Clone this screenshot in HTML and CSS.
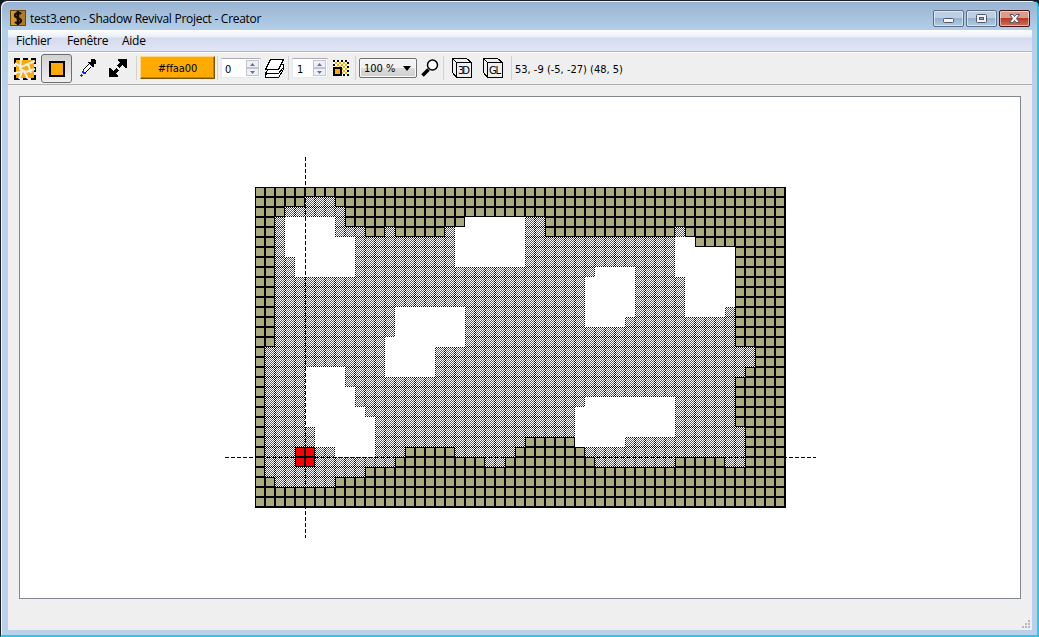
FILE: index.html
```html
<!DOCTYPE html>
<html lang="fr">
<head>
<meta charset="utf-8">
<title>test3.eno - Shadow Revival Project - Creator</title>
<link rel="stylesheet" href="styles.css">
</head>
<body>
<div class="window">
  <header class="titlebar">
    <svg class="app-icon" width="16" height="16" viewBox="0 0 16 16"><rect width="16" height="16" fill="#6b4510"/><rect x="1" y="1" width="14" height="14" fill="#b47b1c"/><path d="M1 1h5v14H1z" fill="#d69a2c"/><path d="M11 4C9 2 5 3 5 5.500S11 8 11 10.500 7 14 5 12M8 1v14" fill="none" stroke="#19110a" stroke-width="2.300"/></svg>
    <h1 class="title">test3.eno - Shadow Revival Project - Creator</h1>
    <div class="controls">
      <span class="control"><svg width="29" height="15" viewBox="0 0 29 15"><rect x="9.500" y="7.500" width="10" height="4" rx="1" fill="#f4f4f4" stroke="#535666"/></svg></span>
      <span class="control"><svg width="29" height="15" viewBox="0 0 29 15"><rect x="9.500" y="3.500" width="10" height="8" rx="1" fill="#f4f4f4" stroke="#535666"/><rect x="12.500" y="6.500" width="4" height="2" fill="#8fb0d0" stroke="#535666"/></svg></span>
      <span class="control control-close"><svg width="29" height="15" viewBox="0 0 29 15"><path d="M10 3.500h3l1.500 2 1.500-2h3.500L16.500 7.500l3 4H16l-1.500-2-1.500 2H9.500l3-4z" fill="#f4f4f4" stroke="#535666"/></svg></span>
    </div>
  </header>
  <nav class="menubar"><span class="m-file">Fichier</span><span class="m-window">Fenêtre</span><span>Aide</span></nav>
  <div class="toolbar">
    <svg class="i-select" width="22" height="22" viewBox="0 0 22 22" shape-rendering="crispEdges"><rect x="2" y="2" width="18" height="18" fill="#ffaa00"/><path d="M0 6V0h6v2H2v4zM9 0h5v2H9zM17 0h5v6h-2V2h-3zM0 9h2v5H0zM20 9h2v5h-2zM0 17h2v3h4v2H0zM9 20h5v2H9zM17 20h3v-3h2v5h-5z"/><path d="M1 5l6 4 14-6M7 1l-1 10 6 3 9-3M1 15l9-2 4 8M14 6l3 9M5 21l3-7" fill="none" stroke="#efefef" stroke-width="2" shape-rendering="auto"/></svg>
    <span class="tool-active"><svg width="16" height="16" viewBox="0 0 16 16"><path d="M0 0h16v16H0z"/><path d="M2 2h12v12H2z" fill="#ffaa00"/></svg></span>
    <svg class="i-picker" width="16" height="19" viewBox="0 0 16 19" shape-rendering="crispEdges"><path d="M11 0h4v1h1v4h-2v3h-2V7h-1V6h-1V5H9V4H8V3h3z"/><path d="M9 5L3 11v3h2l6-6" fill="#fff" stroke="#000"/><path d="M3 11h1v2h1v1h1v1H3v-1H2v-2h1zM1 15h1v1h1v1H2v1H1v-1H0v-1h1z" fill="#22f"/></svg>
    <svg class="i-expand" width="18" height="18" viewBox="0 0 18 18" shape-rendering="crispEdges"><path d="M9 0h9v9h-2V8h-1V7h-1V6h-1v1h-1v1h-1v1h-1V8H9V7H8V6h1V5h1V4h1V3h-1V2H9zM0 9h2v1h1v1h1v1h1v-1h1v-1h1V9h1v1h1v1h1v1H9v1H8v1H7v1h1v1h1v2H0z"/></svg>
    <i class="sep sep-a"></i>
    <span class="color-button">#ffaa00</span>
    <i class="sep sep-b"></i>
    <span class="spin spin-wide"><span>0</span><span class="arrows"><i><svg width="5" height="3"><path d="M0 3L2.500 0 5 3z"/></svg></i><i><svg width="5" height="3"><path d="M0 0h5L2.500 3z"/></svg></i></span></span>
    <svg class="i-layers" width="19" height="19" viewBox="0 0 19 19" shape-rendering="crispEdges" fill="#fff" stroke="#000"><path d="M.5 18.500v-2l5-9h13v3l-5 8z"/><path d="M.5 14.500l5-9h13v3l-5 6z"/><path d="M.5 10.500l5-10h13l-5 10z"/></svg>
    <i class="sep sep-c"></i>
    <span class="spin"><span>1</span><span class="arrows"><i><svg width="5" height="3"><path d="M0 3L2.500 0 5 3z"/></svg></i><i><svg width="5" height="3"><path d="M0 0h5L2.500 3z"/></svg></i></span></span>
    <svg class="i-brush" width="16" height="16" viewBox="0 0 16 16" shape-rendering="crispEdges"><defs><pattern id="dots" width="4" height="4" patternUnits="userSpaceOnUse"><path d="M0 0h4v4H0z" fill="#fff"/><path d="M0 0h2v2H0zM2 2h2v2H2z" fill="#ffaa00"/></pattern><pattern id="edge" width="4" height="4" patternUnits="userSpaceOnUse"><path d="M0 0h4v4H0z" fill="#fff"/><path d="M0 0h2v2H0zM2 2h2v2H2z"/></pattern></defs><path d="M0 0h16v16H0z" fill="url(#edge)"/><path d="M2 2h12v12H2z" fill="url(#dots)"/><path d="M0 7h9v9H0z"/><path d="M2 9h5v5H2z" fill="#ffaa00"/></svg>
    <i class="sep sep-d"></i>
    <span class="combo">100 %<svg width="8" height="5"><path d="M0 0h8L4 5z"/></svg></span>
    <svg class="i-zoom" width="18" height="18" viewBox="0 0 18 18"><circle cx="11.500" cy="6" r="5" fill="#fff" stroke="#000" stroke-width="1.500"/><path d="M7.500 10.500L1.500 16.500" stroke="#000" stroke-width="3.500"/></svg>
    <i class="sep sep-e"></i>
    <svg class="i-cube" width="21" height="20" viewBox="0 0 21 20" shape-rendering="crispEdges"><path d="M4.500 4.500h15v15h-15zM4.500 4.500l-4-4h14l5 4M.5.500v14l4 5" fill="none" stroke="#000"/><text x="6" y="16" textLength="12">3D</text></svg>
    <svg class="i-cube" width="21" height="20" viewBox="0 0 21 20" shape-rendering="crispEdges"><path d="M4.500 4.500h15v15h-15zM4.500 4.500l-4-4h14l5 4M.5.500v14l4 5" fill="none" stroke="#000"/><text x="6" y="16" textLength="12">GL</text></svg>
    <i class="sep sep-f"></i>
    <span class="coords">53, -9 (-5, -27) (48, 5)</span>
  </div>
  <main class="workspace">
    <div class="canvas">
      <svg width="1000" height="501" viewBox="20 97 1000 501" shape-rendering="crispEdges">
        <defs>
          <pattern id="wall" x="255" y="187" width="10" height="10" patternUnits="userSpaceOnUse"><path d="M0 0h10v10H0z"/><path d="M1 1h8v8H1z" fill="#aaaa7f"/></pattern>
          <pattern id="check" x="255" y="187" width="2" height="2" patternUnits="userSpaceOnUse"><path d="M0 0h2v2H0z" fill="#fff"/><path d="M1 0h1v1H1zM0 1h1v1H0z" fill="#00aa00"/></pattern>
          <pattern id="rim" x="255" y="187" width="10" height="10" patternUnits="userSpaceOnUse"><path d="M1 0h1v1H1zM3 0h1v1H3zM5 0h1v1H5zM7 0h1v1H7zM9 0h1v1H9zM0 1h1v1H0zM0 3h1v1H0zM0 5h1v1H0zM0 7h1v1H0zM0 9h1v1H0zM9 2h1v1H9zM9 4h1v1H9zM9 6h1v1H9zM9 8h1v1H9zM2 9h1v1H2zM4 9h1v1H4zM6 9h1v1H6zM8 9h1v1H8z"/></pattern>
          <path id="floor" d="M275 217H285V207H305V197H335V207H345V227H365V237H385V227H395V237H445V227H465V217H545V237H675V227H685V237H695V247H735V347H755V367H745V377H735V427H745V467H725V457H675V467H595V457H585V447H575V437H525V447H515V457H505V467H485V457H455V447H405V457H395V467H365V477H335V487H275V477H265V347H275Z"/>
        </defs>
        <path d="M255 187h531v321H255z"/>
        <path d="M255 187h530v320H255z" fill="url(#wall)"/>
        <use href="#floor" fill="url(#check)"/>
        <use href="#floor" fill="url(#rim)"/>
        <g fill="#fff">
          <path d="M285 217H335V237H355V277H295V257H285Z"/>
          <path d="M465 217H525V267H455V227H465Z"/>
          <path d="M395 307H465V347H435V377H385V337H395Z"/>
          <path d="M595 267H635V317H625V327H585V277H595Z"/>
          <path d="M675 237H695V247H735V307H725V317H685V277H675Z"/>
          <path d="M585 397H675V437H625V447H575V407H585Z"/>
          <path d="M305 367H345V387H355V407H365V417H375V457H335V447H315V427H305Z"/>
        </g>
        <path d="M295 447h20v20h-20z"/>
        <path d="M296 448h8v8h-8zM306 448h8v8h-8zM296 458h8v8h-8zM306 458h8v8h-8z" fill="#f00"/>
        <path d="M305.500 157V538M225 457.500H816" stroke="#000" stroke-dasharray="4 2"/>
      </svg>
    </div>
    <svg class="grip" width="9" height="9" viewBox="0 0 9 9"><path d="M6 0h2v2H6zM3 3h2v2H3zM6 3h2v2H6zM0 6h2v2H0zM3 6h2v2H3zM6 6h2v2H6z" fill="#b8b8b8"/></svg>
  </main>
</div>
</body>
</html>
```
FILE: styles.css
```css
* { box-sizing: border-box; }
body { margin: 0; background: #101820; overflow: hidden; font: 12px "Open Sans", sans-serif; color: #000; }
svg { display: block; flex: none; }
.window {
  width: 1039px; height: 637px; display: flex; flex-direction: column;
  padding: 0 5px 5px 7px; border: 1px solid #1c2026; border-right: 2px solid #21cdea; border-bottom: 2px solid #21cdea;
  border-radius: 7px 7px 0 0;
  background: linear-gradient(#98b3d0, #b4cfe8 30px, #b9d1ea 90px); box-shadow: inset 1px 1px #eef4fa;
}
.titlebar { height: 29px; flex: none; display: flex; align-items: center; padding-top: 5px; padding-left: 2px; }
.app-icon { margin-top: -1px; }
.title { font-size: 12px; font-weight: 400; margin: 1px 0 0 4px; letter-spacing: -.28px; white-space: nowrap; }
.controls { margin: 0 2px 0 auto; display: flex; gap: 2px; }
.control { width: 31px; height: 17px; border: 1px solid #5d6f88; border-radius: 2px; background: linear-gradient(#bccfe3 45%, #95b1cf 50%, #b2cce5); box-shadow: inset 0 0 0 1px #ffffff80; }
.control-close { border-color: #43141b; background: linear-gradient(#dc9a8b 45%, #b83a20 50%, #d0705a); }
.menubar { height: 23px; flex: none; display: flex; align-items: center; padding: 0 0 1px 8px; background: linear-gradient(#fff, #e9edf7 7px, #d4dbee 8px, #e1e6f6 21px); border-bottom: 1px solid #fff; box-shadow: inset 0 -1px #b3b7ca; letter-spacing: -.25px; }
.m-file { width: 51px; }
.m-window { width: 55px; }
.toolbar { height: 32px; flex: none; display: flex; align-items: flex-start; background: #efefef; border-bottom: 1px solid #b2b2b2; font-family: "DejaVu Sans Condensed", "DejaVu Sans", sans-serif; font-stretch: condensed; font-size: 11px; letter-spacing: 0; }
.i-select { margin: 5px 5px 0 6px; }
.tool-active { width: 31px; height: 29px; margin-top: 1px; border: 1px solid #6b6e72; border-radius: 3px; background: linear-gradient(#d2d2d2, #efefef); padding: 6px 0 0 7px; }
.i-picker { margin: 6px 0 0 8px; }
.i-expand { margin: 6px 0 0 13px; }
.sep { width: 1px; height: 24px; margin-top: 3px; background: #d2d2d2; flex: none; }
.sep-a { margin-left: 9px; }
.color-button { width: 75px; height: 23px; margin: 3px 0 0 3px; background: #ffaa00; border: 1px solid; border-color: #ffd58a #7d5300 #7d5300 #ffd58a; box-shadow: inset -1px -1px #c08000; text-align: center; line-height: 23px; letter-spacing: -.1px; }
.sep-b { margin-left: 2px; }
.spin { width: 36px; height: 20px; margin: 5px 0 0 3px; background: #fff; border: 1px solid #e3e9ef; border-top-color: #abadb3; display: flex; justify-content: space-between; line-height: 19px; padding: 1px 1px 1px 4px; }
.spin-wide { width: 40px; padding-left: 3px; }
.arrows { width: 13px; display: flex; flex-direction: column; gap: 0; fill: #5d74ae; }
.arrows i { height: 8px; border: 1px solid #c2c5cd; background: #f0f0f4; padding: 2px 3px; }
.i-layers { margin: 6px 0 0 4px; }
.sep-c { margin-left: 4px; }
.i-brush { margin: 7px 0 0 5px; }
.sep-d { margin-left: 6px; }
.combo { width: 58px; height: 20px; margin: 5px 0 0 3px; border: 1px solid #707070; border-radius: 2px; background: linear-gradient(#f2f2f2 50%, #dcdcdc 50%, #cfcfcf); box-shadow: inset 0 0 0 1px #fbfbfb; display: flex; justify-content: space-between; align-items: center; padding: 1px 5px 0 4px; white-space: nowrap; }
.i-zoom { margin: 6px 0 0 4px; }
.sep-e { margin-left: 4px; }
.i-cube { margin: 5px 2px 0 8px; }
.i-cube text { font: 10px "DejaVu Sans", sans-serif; letter-spacing: 0; }
.sep-f { margin-left: 5px; }
.coords { margin: 10px 0 0 3px; white-space: nowrap; }
.workspace { flex: 1; background: #efefef; padding: 11px 0 0 11px; position: relative; }
.canvas { width: 1002px; height: 503px; border: 1px solid #828790; background: #fff; }
.grip { position: absolute; right: 1px; bottom: 1px; }
```
